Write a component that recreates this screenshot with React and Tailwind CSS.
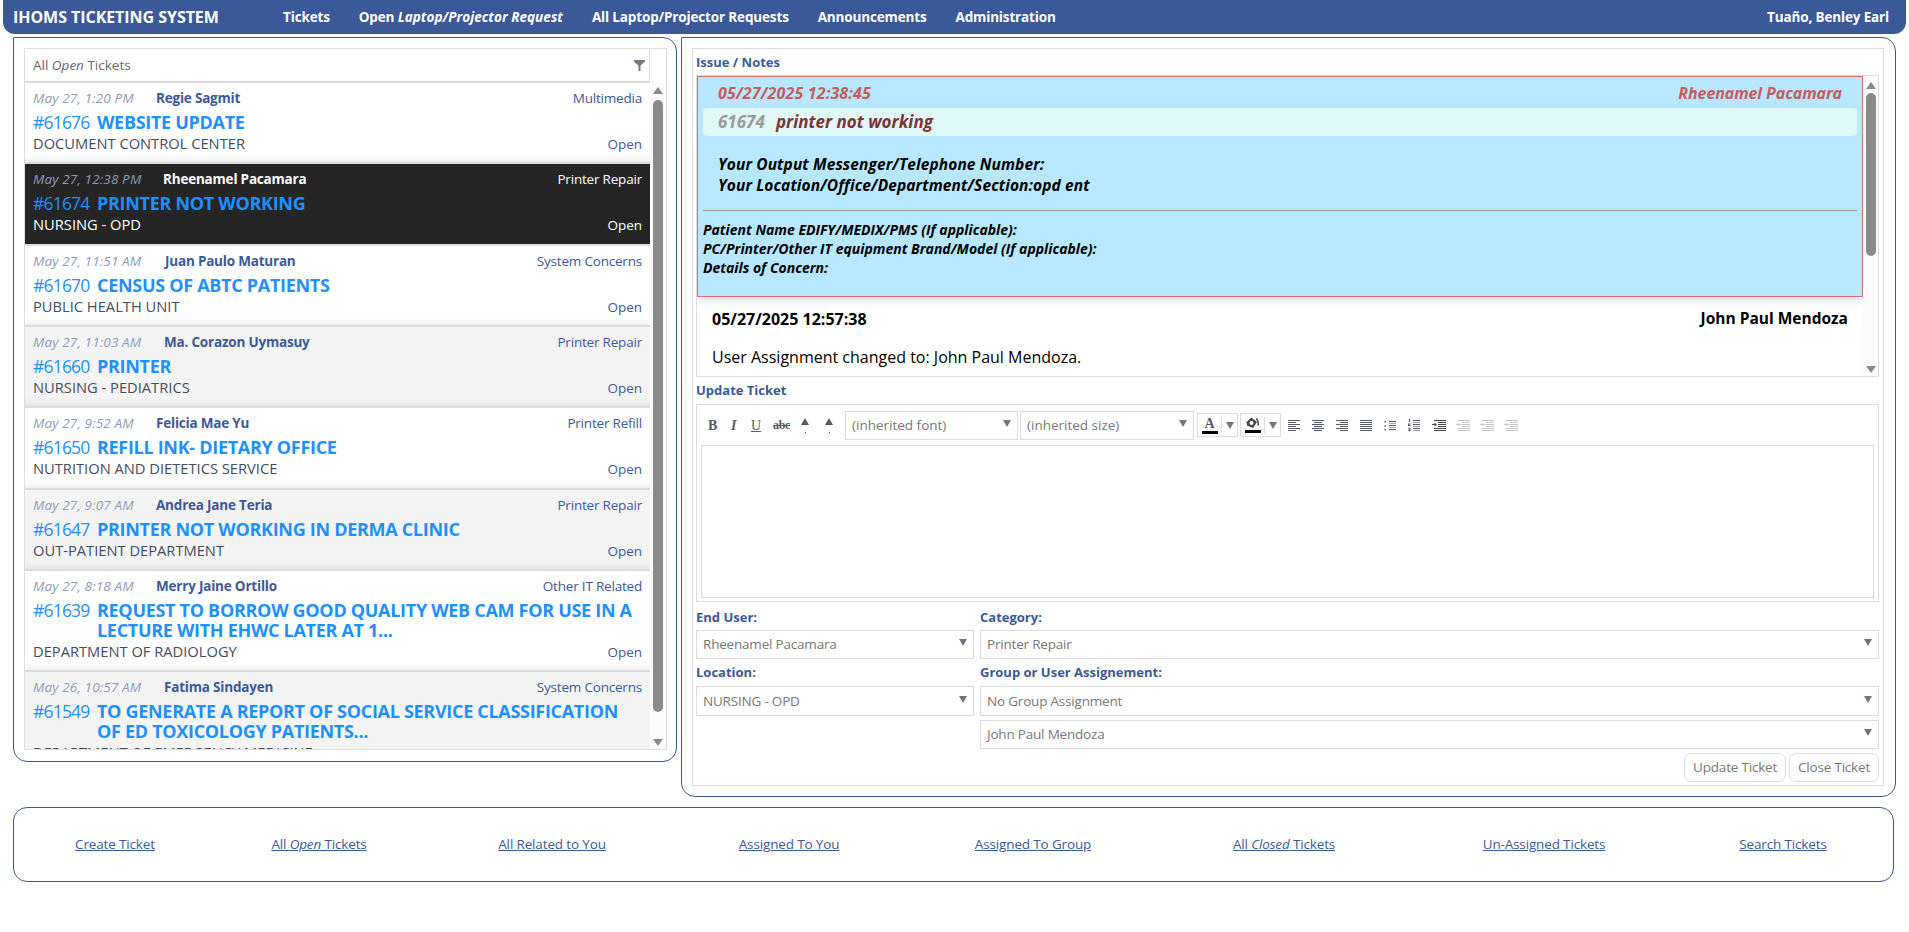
import React from "react";

const F = "font-['Open_Sans','Noto_Sans',sans-serif]";

function Row({ bg = "bg-white", time, name, nameGap, cat, id, title, dept, dark }) {
  return (
    <div className={`shrink-0 border-t-2 border-[#dcdcdc] pt-[6px] pb-[9.33px] px-[8px] ${dark ? "bg-[#252525]" : bg} ${dark ? "" : "shadow-[inset_0_-10px_10px_-10px_rgba(0,0,0,0.12)]"}`}>
      <div className="flex h-[18px] items-center text-[13.5px]">
        <span className="italic text-[#8e9ab8] shrink-0 tracking-[0.15px]" style={{ width: nameGap }}>{time}</span>
        <span className={`font-bold tracking-[-0.2px] ${dark ? "text-white" : "text-[#3b5998]"}`}>{name}</span>
        <span className={`ml-auto tracking-[-0.2px] ${dark ? "text-white" : "text-[#3b5998]"}`}>{cat}</span>
      </div>
      <div className="flex mt-[5px] text-[18px] leading-[20px] text-[#1e90ff]">
        <span className="w-[64px] shrink-0 text-[17.5px] tracking-[-0.8px]">{id}</span>
        <span className="font-bold tracking-[-0.3px]">{title}</span>
      </div>
      <div className={`flex mt-[1px] h-[20px] items-center text-[14.7px] ${dark ? "text-white" : "text-[#444c60]"}`}>
        <span>{dept}</span>
        <span className={`ml-auto mt-[2px] text-[13.5px] ${dark ? "text-white" : "text-[#3b5998]"}`}>Open</span>
      </div>
    </div>
  );
}

function Caret({ className = "" }) {
  return (
    <svg width="8" height="7" viewBox="0 0 8 7" className={className}>
      <path d="M0 0h8L4 7z" fill="#6f7580" />
    </svg>
  );
}

function UpArrow({ className = "" }) {
  return (
    <svg width="10" height="7" viewBox="0 0 10 7" className={className}>
      <path d="M5 0l5 7H0z" fill="#8a8a8a" />
    </svg>
  );
}

function Scrollbar({ width, thumbTop, thumbHeight }) {
  return (
    <div className={`shrink-0 bg-[#fbfbfb] flex flex-col items-center relative self-stretch ${width}`}>
      <UpArrow className="mt-[6px]" />
      <div className="w-[10px] bg-[#8a8a8a] rounded-[5px] absolute" style={{ top: thumbTop, height: thumbHeight }} />
      <UpArrow className="mt-auto mb-[3px] rotate-180" />
    </div>
  );
}

function Select({ cls = "h-[29px]", text }) {
  return (
    <div className={`flex items-center border border-[#dcdcdc] pl-[6px] pr-[6px] text-[13.5px] tracking-[-0.2px] text-[#777] ${cls}`}>
      <span>{text}</span>
      <Caret className="ml-auto -mt-[4px]" />
    </div>
  );
}

function Label({ children, className = "" }) {
  return <div className={`text-[13px] font-bold text-[#3b5998] ${className}`}>{children}</div>;
}

function Lines({ kind }) {
  const rows = {
    left: [12, 8, 12, 8, 12, 8],
    center: [12, 8, 12, 8, 12, 8],
    right: [12, 8, 12, 8, 12, 8],
    full: [12, 12, 12, 12, 12, 12],
  }[kind];
  return (
    <svg width="12" height="11" viewBox="0 0 12 11">
      {rows.map((w, i) => {
        const x = kind === "center" ? (12 - w) / 2 : kind === "right" ? 12 - w : 0;
        return <rect key={i} x={x} y={i * 2} width={w} height="1" fill="#555b66" />;
      })}
    </svg>
  );
}

function BulletIcon() {
  return (
    <svg width="12" height="11" viewBox="0 0 12 11">
      {[1, 5, 9].map((y) => (
        <g key={y}>
          <rect x="0.5" y={y} width="1.5" height="1.5" fill="#555b66" />
          <rect x="5" y={y} width="7" height="1" fill="#555b66" />
        </g>
      ))}
      <rect x="5" y="3" width="7" height="1" fill="#aaa" />
      <rect x="5" y="7" width="7" height="1" fill="#aaa" />
    </svg>
  );
}

function OrderedIcon() {
  return (
    <svg width="12" height="12" viewBox="0 0 12 12">
      <rect x="1" y="0" width="1" height="3" fill="#555b66" />
      <path d="M0 4.5h2.5v1H1v.5h1.500v1H0z" fill="#555b66" />
      <path d="M0 9h2.500v3H0v-.7h1.500v-.4H.6v-.7h.9v-.4H0z" fill="#555b66" />
      {[1, 3, 5, 7, 9, 11].map((y) => (
        <rect key={y} x="5" y={y} width="7" height="1" fill={y % 4 === 1 ? "#555b66" : "#999"} />
      ))}
    </svg>
  );
}

function IndentIcon({ dim, out }) {
  const c = dim ? "#c4c8cc" : "#444";
  return (
    <svg width="14" height="11" viewBox="0 0 14 11">
      <rect x="2" y="0" width="12" height="1" fill={c} />
      <rect x="6" y="2" width="8" height="1" fill={c} />
      <rect x="6" y="4" width="8" height="1" fill={c} />
      <rect x="6" y="6" width="8" height="1" fill={c} />
      <rect x="2" y="8" width="12" height="1" fill={c} />
      <rect x="2" y="10" width="12" height="1" fill={c} />
      {out ? <path d="M0 4.500L2.500 2.500v1.500H5v1H2.500v1.500z" fill={c} /> : <path d="M5 4.500L2.500 2.500v1.500H0v1h2.500v1.500z" fill={c} />}
    </svg>
  );
}

function ColorBtn({ children }) {
  return (
    <div className="flex items-center h-[24px] w-[41px] border border-[#dcdcdc]">
      <div className="w-[23px] flex flex-col items-center">
        {children}
        <div className="w-[16px] h-[3px] bg-black" />
      </div>
      <div className="h-[16px] border-l border-[#dcdcdc]" />
      <Caret className="ml-[4px]" />
    </div>
  );
}

function SupIcon() {
  return (
    <div className="w-[24px] flex flex-col items-center">
      <svg width="8" height="7" viewBox="0 0 8 7">
        <path d="M4 0l4 7H0z" fill="#555b66" />
      </svg>
      <div className="w-[1px] h-[1px] bg-[#555] mt-[7px]" />
    </div>
  );
}

export default function App() {
  const navLink = "text-[13.5px] font-bold tracking-[-0.15px]";
  const ctl = "h-[29px] border border-[#dcdcdc] flex items-center text-[13.5px] text-[#777]";
  const btn = "h-[29px] px-[8px] border border-[#dcdcdc] rounded-[7px] flex items-center text-[13.5px] tracking-[-0.2px] text-[#777]";
  return (
    <div className={`${F} min-h-[932px] bg-white`}>
      <nav className="mx-[3px] h-[34px] bg-[#3b5998] rounded-b-[12px] flex items-center text-white pl-[10px] pr-[17px]">
        <span className="text-[16px] font-bold tracking-[-0.05px] w-[270px]">IHOMS TICKETING SYSTEM</span>
        <div className="flex gap-[29px]">
          <span className={navLink}>Tickets</span>
          <span className={navLink}>Open <i className="tracking-[0.05px]">Laptop/Projector Request</i></span>
          <span className={navLink}>All Laptop/Projector Requests</span>
          <span className={navLink}>Announcements</span>
          <span className={navLink}>Administration</span>
        </div>
        <span className={`${navLink} ml-auto`}>Tuaño, Benley Earl</span>
      </nav>

      <div className="flex items-start pl-[13px] pt-[3px] gap-[4px]">
        <section className="w-[664px] h-[725px] border border-[#3b5998] rounded-[0_14px_14px_14px] pt-[10px] pl-[10px] pr-[9px]">
          <div className="border border-[#dcdcdc] h-[702px] flex flex-col">
            <div className="h-[32px] shrink-0 flex items-center text-[13.5px] text-[#666]">
              <span className="pl-[8px]">All <i>Open</i> Tickets</span>
              <div className="ml-auto h-full flex items-center w-[16px] border-r border-[#dcdcdc] mr-[16px]">
                <svg width="11" height="11" viewBox="0 0 11 11"><path d="M0 0h11v1.500L6.500 5.500V11h-2V5.500L0 1.500z" fill="#6f7888" /></svg>
              </div>
            </div>
            <div className="flex flex-1 min-h-0 overflow-hidden">
              <div className="flex-1 min-w-0 overflow-hidden flex flex-col">
                <Row time="May 27, 1:20 PM" nameGap="123px" name="Regie Sagmit" cat="Multimedia" id="#61676" title="WEBSITE UPDATE" dept="DOCUMENT CONTROL CENTER" />
                <Row dark time="May 27, 12:38 PM" nameGap="130px" name="Rheenamel Pacamara" cat="Printer Repair" id="#61674" title="PRINTER NOT WORKING" dept="NURSING - OPD" />
                <Row time="May 27, 11:51 AM" nameGap="132px" name="Juan Paulo Maturan" cat="System Concerns" id="#61670" title="CENSUS OF ABTC PATIENTS" dept="PUBLIC HEALTH UNIT" />
                <Row bg="bg-[#f4f4f4]" time="May 27, 11:03 AM" nameGap="131px" name="Ma. Corazon Uymasuy" cat="Printer Repair" id="#61660" title="PRINTER" dept="NURSING - PEDIATRICS" />
                <Row time="May 27, 9:52 AM" nameGap="123px" name="Felicia Mae Yu" cat="Printer Refill" id="#61650" title="REFILL INK- DIETARY OFFICE" dept="NUTRITION AND DIETETICS SERVICE" />
                <Row bg="bg-[#f4f4f4]" time="May 27, 9:07 AM" nameGap="123px" name="Andrea Jane Teria" cat="Printer Repair" id="#61647" title="PRINTER NOT WORKING IN DERMA CLINIC" dept="OUT-PATIENT DEPARTMENT" />
                <Row time="May 27, 8:18 AM" nameGap="123px" name="Merry Jaine Ortillo" cat="Other IT Related" id="#61639" title="REQUEST TO BORROW GOOD QUALITY WEB CAM FOR USE IN A LECTURE WITH EHWC LATER AT 1..." dept="DEPARTMENT OF RADIOLOGY" />
                <Row bg="bg-[#f4f4f4]" time="May 26, 10:57 AM" nameGap="131px" name="Fatima Sindayen" cat="System Concerns" id="#61549" title="TO GENERATE A REPORT OF SOCIAL SERVICE CLASSIFICATION OF ED TOXICOLOGY PATIENTS..." dept="DEPARTMENT OF EMERGENCY MEDICINE" />
              </div>
              <Scrollbar width="w-[16px]" thumbTop="19px" thumbHeight="612px" />
            </div>
          </div>
        </section>

        <section className="w-[1215px] h-[760px] border border-[#3b5998] rounded-[0_14px_14px_14px] pt-[10px] pl-[10px] pr-[11px]">
          <div className="border border-[#dcdcdc] h-[738px] pl-[3px] pr-[4px] pb-[2px]">
            <Label className="h-[26px] flex items-center pt-[1px]">Issue / Notes</Label>
            <div className="border border-[#dcdcdc] h-[302px] flex overflow-hidden">
              <div className="flex-1 min-w-0">
                <div className="h-[221px] bg-[#b8e8ff] border border-[#d9706f] shadow-[0_3px_8px_rgba(0,0,0,0.15)] px-[5px] italic font-bold overflow-hidden">
                  <div className="flex h-[31px] items-center text-[16px] text-[#c85a5a] pl-[15px] pr-[15px]">
                    <span className="tracking-[0.15px]">05/27/2025 12:38:45</span>
                    <span className="ml-auto tracking-[-0.1px]">Rheenamel Pacamara</span>
                  </div>
                  <div className="h-[28px] rounded-[4px] bg-[#e0f9f7] flex items-center pl-[15px] text-[17px]">
                    <span className="text-[#9a9a9a] w-[58px]">61674</span>
                    <span className="text-[#7b3535]">printer not working</span>
                  </div>
                  <div className="mt-[18px] pl-[15px] text-[15.5px] tracking-[0.1px] leading-[21px] text-black">
                    <div>Your Output Messenger/Telephone Number:</div>
                    <div>Your Location/Office/Department/Section:opd ent</div>
                  </div>
                  <div className="mt-[14px] border-t border-[#999]" />
                  <div className="mt-[9px] text-[14px] leading-[19px] text-black">
                    <div>Patient Name EDIFY/MEDIX/PMS (If applicable):</div>
                    <div>PC/Printer/Other IT equipment Brand/Model (If applicable):</div>
                    <div>Details of Concern:</div>
                  </div>
                </div>
                <div className="pl-[15px] pr-[15px] text-black">
                  <div className="flex items-center font-bold mt-[10px]">
                    <span className="text-[16px]">05/27/2025 12:57:38</span>
                    <span className="ml-auto text-[15.5px]">John Paul Mendoza</span>
                  </div>
                  <div className="mt-[14px] text-[16px]">User Assignment changed to: John Paul Mendoza.</div>
                </div>
              </div>
              <Scrollbar width="w-[15px]" thumbTop="17px" thumbHeight="163px" />
            </div>

            <Label className="h-[27px] flex items-center pt-[1px]">Update Ticket</Label>
            <div className="border border-[#dcdcdc] h-[198px] px-[4px] pt-[5px]">
              <div className="flex items-center h-[30px] pl-[7px]">
                <span className="w-[19px] font-['Liberation_Serif'] font-bold text-[14px] text-[#555b66]">B</span>
                <span className="w-[24px] font-['Liberation_Serif'] italic font-bold text-[14px] text-[#555b66] pl-[4px]">I</span>
                <span className="w-[22px] font-['Liberation_Serif'] underline text-[14px] text-[#555b66]">U</span>
                <span className="w-[20px] font-['Liberation_Serif'] text-[12px] line-through text-[#555b66] font-bold tracking-[-0.3px]">abc</span>
                <SupIcon />
                <SupIcon />
                <div className={`${ctl} ml-[4px] w-[173px] px-[6px]`}>
                  <span>(inherited font)</span><Caret className="ml-auto -mt-[4px]" />
                </div>
                <div className={`${ctl} ml-[2px] w-[174px] px-[6px]`}>
                  <span>(inherited size)</span><Caret className="ml-auto -mt-[4px]" />
                </div>
                <div className="ml-[3px] flex gap-[2px]">
                  <ColorBtn>
                    <span className="font-['Liberation_Serif'] font-bold text-[14px] leading-[15px] text-[#555b66]">A</span>
                  </ColorBtn>
                  <ColorBtn>
                    <svg width="15" height="14" viewBox="0 0 15 14" className="-mt-[1px]"><path d="M6.500 1.500L12 6 8 12 2 9.500 1.500 6z" fill="#444" /><circle cx="6.500" cy="7" r="2" fill="#fff" /><path d="M11 2.500c2 1.500 2.500 4 2.300 7" stroke="#444" strokeWidth="1.500" fill="none" /></svg>
                  </ColorBtn>
                </div>
                <div className="ml-[7px] flex items-center gap-[12px]">
                  <Lines kind="left" />
                  <Lines kind="center" />
                  <Lines kind="right" />
                  <Lines kind="full" />
                  <BulletIcon />
                  <OrderedIcon />
                  <div className="flex gap-[10px]">
                    <IndentIcon />
                    <IndentIcon dim out />
                    <IndentIcon dim out />
                    <IndentIcon dim out />
                  </div>
                </div>
              </div>
              <div className="mt-[5px] h-[153px] border border-[#dcdcdc]" />
            </div>

            <div className="grid grid-cols-[278px_1fr] gap-x-[6px]">
              <Label className="h-[28px] flex items-center pt-[3px]">End User:</Label>
              <Label className="h-[28px] flex items-center pt-[3px]">Category:</Label>
              <Select text="Rheenamel Pacamara" />
              <Select text="Printer Repair" />
              <Label className="h-[27px] flex items-center">Location:</Label>
              <Label className="h-[27px] flex items-center">Group or User Assignement:</Label>
              <Select text="NURSING - OPD" cls="h-[30px]" />
              <Select text="No Group Assignment" cls="h-[30px]" />
              <div />
              <Select text="John Paul Mendoza" cls="h-[29px] mt-[4px]" />
            </div>
            <div className="flex justify-end gap-[3px] mt-[4px]">
              <span className={btn}>Update Ticket</span>
              <span className={btn}>Close Ticket</span>
            </div>
          </div>
        </section>
      </div>

      <footer className="ml-[13px] mt-[10px] w-[1881px] h-[75px] border border-[#3b5998] rounded-[14px] grid grid-cols-[202px_206px_260px_214px_274px_228px_292px_186px] items-center text-center text-[13.5px] tracking-[-0.15px] text-[#3b5998]">
        <span className="underline">Create Ticket</span>
        <span className="underline">All <i>Open</i> Tickets</span>
        <span className="underline">All Related to You</span>
        <span className="underline">Assigned To You</span>
        <span className="underline">Assigned To Group</span>
        <span className="underline">All <i>Closed</i> Tickets</span>
        <span className="underline">Un-Assigned Tickets</span>
        <span className="underline">Search Tickets</span>
      </footer>
    </div>
  );
}
